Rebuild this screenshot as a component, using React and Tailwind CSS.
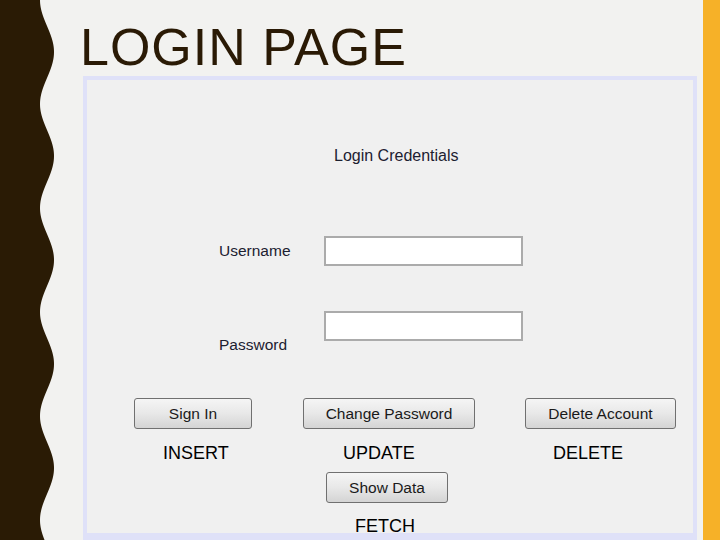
import React from 'react';

// wavy dark ribbon down the left side
function WaveStrip() {
  const pts = [];
  for (let y = 0; y <= 540; y += 2) {
    const x = 47 - 7 * Math.cos((2 * Math.PI * y) / 104);
    pts.push(`${x.toFixed(2)},${y}`);
  }
  const d = `M0,0 L${pts.join(' L')} L0,540 Z`;
  return (
    <svg width="54" height="540" viewBox="0 0 54 540" className="shrink-0 block">
      <path d={d} fill="#2a1b05" />
    </svg>
  );
}

function WinButton({ children, className }) {
  return (
    <div
      className={`shrink-0 h-[31px] flex items-center justify-center rounded-[3px] border border-[#707070] bg-linear-to-b from-[#f5f5f5] via-[#e8e8e8] to-[#d4d4d4] text-[15.5px] leading-5 text-[#1a1a1a] ${className}`}
    >
      {children}
    </div>
  );
}

function App() {
  return (
    <div
      className="w-[720px] h-[540px] flex bg-[#f2f2f0] overflow-hidden"
      style={{ fontFamily: '"Liberation Sans", Arial, sans-serif' }}
    >
      <WaveStrip />

      <div className="flex-1 flex flex-col pl-[24px] pr-[6px]">
        <h1 className="shrink-0 mt-[21px] ml-[2px] h-[52px] text-[52px] leading-none tracking-[1px] text-[#2a1a05] whitespace-nowrap">
          LOGIN PAGE
        </h1>

        <div className="shrink-0 mt-[3px] ml-[5px] h-[464px] border-4 border-b-[7px] border-[#dfe1f8] bg-[#f0f0f0] flex flex-col">
          <div className="shrink-0 mt-[66px] ml-[247px] text-[16px] leading-5 text-[#1c2030]">
            Login Credentials
          </div>

          <div className="shrink-0 mt-[70px] flex items-start">
            <span className="ml-[132px] w-[105px] mt-[5px] text-[15.5px] leading-5 text-[#1c2030]">Username</span>
            <div className="w-[199px] h-[30px] border-2 border-[#ababab] bg-white"></div>
          </div>

          <div className="shrink-0 mt-[45px] flex items-start">
            <span className="ml-[132px] w-[105px] mt-[24px] text-[15.5px] leading-5 text-[#1c2030]">Password</span>
            <div className="w-[199px] h-[30px] border-2 border-[#ababab] bg-white"></div>
          </div>

          <div className="shrink-0 mt-[43px] flex">
            <WinButton className="ml-[47px] w-[118px]">Sign In</WinButton>
            <WinButton className="ml-[51px] w-[172px]">Change Password</WinButton>
            <WinButton className="ml-[50px] w-[151px]">Delete Account</WinButton>
          </div>

          <div className="shrink-0 mt-[14px] flex text-[18px] leading-5 text-black">
            <span className="ml-[76px] w-[180px]">INSERT</span>
            <span className="w-[210px]">UPDATE</span>
            <span>DELETE</span>
          </div>

          <WinButton className="mt-[9px] ml-[239px] w-[122px]">Show Data</WinButton>

          <div className="shrink-0 mt-[13px] ml-[268px] text-[18px] leading-5 text-black">FETCH</div>
        </div>
      </div>

      <div className="w-[17px] shrink-0 bg-[#f6b128]"></div>
    </div>
  );
}

export default App;
